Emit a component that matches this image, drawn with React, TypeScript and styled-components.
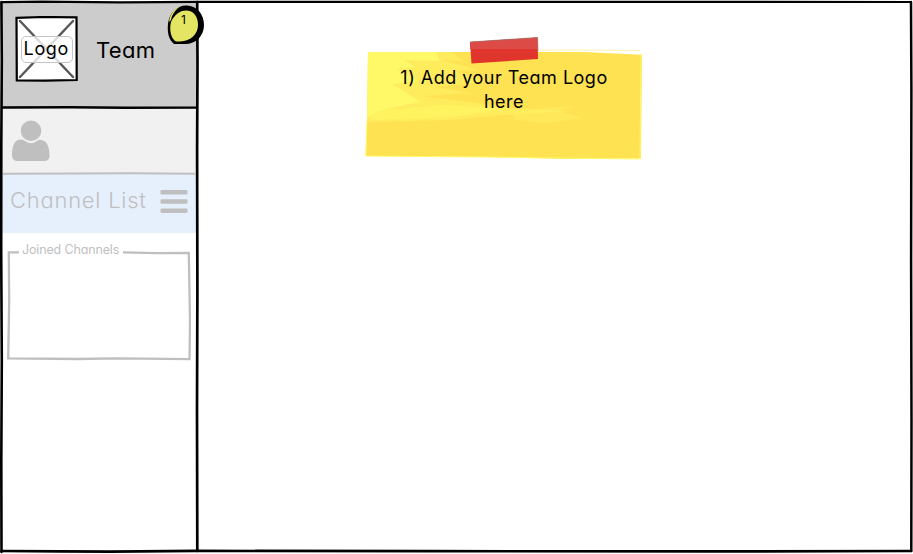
import React from "react";
import styled, { createGlobalStyle } from "styled-components";

const GlobalStyle = createGlobalStyle`
  * { box-sizing: border-box; }
  html, body { margin: 0; background: #fff; overflow: hidden; }
  body { font-family: Inter, "Liberation Sans", sans-serif; font-feature-settings: "cv11" 1; color: #000; }
  svg { display: block; }
`;

const Page = styled.div`
  position: relative;
  display: flex;
  width: 913px;
  height: 554px;
  padding: 2px;
  overflow: hidden;
`;

const Overlay = styled.svg`
  position: absolute;
  inset: 0;
  pointer-events: none;
`;

const Sidebar = styled.aside`
  display: flex;
  flex-direction: column;
  width: 194px;
`;

const TeamHeader = styled.header`
  display: flex;
  align-items: flex-start;
  height: 106px;
  padding: 14px 0 0 13px;
  background: #ccc;
`;

const LogoBox = styled.div`
  position: relative;
  width: 63px;
  height: 66px;
`;

const LogoLabel = styled.span`
  position: absolute;
  left: 6px;
  top: 20px;
  width: 52px;
  height: 27px;
  padding-left: 1.5px;
  border: 1px solid #c4c4c4;
  border-radius: 5px;
  background: rgba(255, 255, 255, 0.78);
  font-size: 18px;
  line-height: 24px;
  letter-spacing: 0.7px;
  white-space: nowrap;
`;

const TeamName = styled.h1`
  margin: 21px 0 0 18px;
  font-size: 22px;
  font-weight: 400;
  line-height: 27px;
  letter-spacing: 0.3px;
`;

const UserBar = styled.section`
  height: 65px;
  padding: 12px 0 0 10px;
  background: #f1f1f1;
`;

const ChannelBar = styled.section`
  display: flex;
  align-items: flex-start;
  justify-content: space-between;
  height: 60px;
  padding: 14px 8px 0 8px;
  background: #e6f0fd;
  color: #bfbfbf;
`;

const ChannelTitle = styled.h2`
  margin: 0;
  font-size: 22px;
  font-weight: 350;
  line-height: 27px;
  letter-spacing: 0.75px;
  white-space: nowrap;
`;

const MenuIcon = styled.svg`
  margin-top: 3px;
`;

const ChannelGroup = styled.section`
  position: relative;
  height: 120px;
  margin: 8px 5px 0;
  padding: 1px 0 0 15px;
  color: #bfbfbf;
`;

const GroupLabel = styled.h3`
  margin: 0;
  font-size: 12.5px;
  font-weight: 400;
  line-height: 16px;
  letter-spacing: -0.15px;
  white-space: nowrap;
`;

const Workspace = styled.main`
  flex: 1;
  padding: 34px 0 0 168px;
`;

const Note = styled.article`
  position: relative;
  width: 280px;
  height: 126px;
  padding: 30px 30px 0;
`;

const NoteText = styled.p`
  position: relative;
  margin: 0 -4px;
  font-size: 18px;
  line-height: 24px;
  letter-spacing: 0.5px;
  text-align: center;
`;

const Badge = styled.div`
  position: absolute;
  left: 165px;
  top: 4px;
  width: 40px;
  height: 42px;
`;

const BadgeNumber = styled.span`
  position: absolute;
  left: 16px;
  top: 8px;
  font-size: 12px;
  line-height: 16px;
`;

function PageOutline() {
  return (
    <Overlay width="913" height="554" viewBox="0 0 913 554" fill="none" stroke="#000" strokeLinecap="round">
      <path d="M2 2.2L42 1.6L120 2.3L197 1.8L420 1.8L650 1.8L911 2" strokeWidth="2.2" />
      <path d="M1.4 2L1.8 60L1.3 145L1.2 250L1.8 360L1.3 460L1.5 552" strokeWidth="2.6" />
      <path d="M911 2L911.4 90L911.1 260L911.5 420L911.3 551" strokeWidth="2.5" />
      <path d="M1.5 551L60 551.3L110 551.6L197 550.9L430 551.2L710 551.4L911 551" strokeWidth="2.7" />
      <path d="M197.2 2L197.5 65L197.1 150L197.4 290L197 410L197.3 551" strokeWidth="2.7" />
      <path d="M2 107.5L70 107.2L125 107.8L196 107.6" strokeWidth="2.4" />
      <path d="M3 173.8L70 173.5L130 173.2L196 173.8" stroke="#bfbfbf" strokeWidth="2" strokeLinecap="butt" />
    </Overlay>
  );
}

export default function App() {
  return (
    <>
      <GlobalStyle />
      <Page>
        <Sidebar>
          <TeamHeader>
            <LogoBox>
              <svg width="63" height="66" viewBox="0 0 63 66">
                <path d="M1.5 1.8L29 1L61.5 1.4L61.7 64L30 64.6L1.8 64.4Z" fill="#fff" stroke="#000" strokeWidth="2.2" />
                <path d="M5 5L58 61M58 5L5 61" stroke="#595959" strokeWidth="2.5" strokeLinecap="round" />
              </svg>
              <LogoLabel>Logo</LogoLabel>
            </LogoBox>
            <TeamName>Team</TeamName>
          </TeamHeader>
          <UserBar>
            <svg width="38" height="42" viewBox="0 0 38 42" fill="#bfbfbf">
              <ellipse cx="19" cy="10.8" rx="10.3" ry="10.3" />
              <path d="M8 19.5Q11 19 13 21Q19 25.5 25 21Q27 19 31 20.5C36 22 37.5 29 37.5 36Q37.5 41 32 41H6Q0 41 0 35C0 27 2 20 8 19.5Z" />
            </svg>
          </UserBar>
          <ChannelBar>
            <ChannelTitle>Channel List</ChannelTitle>
            <MenuIcon width="28" height="24" viewBox="0 0 28 24" fill="#bfbfbf">
              <rect x="0.5" y="0" width="27" height="4.5" rx="1.3" />
              <rect x="0.5" y="9.2" width="27" height="4.5" rx="1.3" />
              <rect x="0.5" y="18.4" width="27" height="4.5" rx="1.3" />
            </MenuIcon>
          </ChannelBar>
          <ChannelGroup>
            <GroupLabel>Joined Channels</GroupLabel>
            <Overlay width="184" height="120" viewBox="0 0 184 120" fill="none" stroke="#bfbfbf" strokeWidth="2.3">
              <path d="M12 11.3H1.8L2.2 60L1.2 117.4L70 118L110 117.3L182.5 118.2L183 80L181.8 11.8L150 12.2L116 11.3" />
            </Overlay>
          </ChannelGroup>
        </Sidebar>
        <Workspace>
          <Note>
            <Overlay width="280" height="126" viewBox="0 0 280 126">
              <path d="M4 16H220L278 18.8L277 122.5L200 123L120 121L1.5 120L3 84Z" fill="#ffe252" />
              <path d="M4 16H88L99 25L78 24L116 34L90 35L124 46L69 51L108 57L60 60L112 67L145 72L210 75L140 79L88 84L3 86Z" fill="#fff568" opacity=".5" />
              <path d="M4 16H72L76 25L40 24L52 31L33 33L54 45L28 48L57 66L13 75L3 82Z" fill="#ffff6e" opacity=".7" />
              <path d="M7 75L80 69L138 73L89 81L7 84Z" fill="#ffff66" opacity=".36" />
              <path d="M150 77L186 71L214 70L194 75L219 82L182 87L150 84Z" fill="#fff365" opacity=".4" />
              <path d="M3 85L2 120L125 121L276 123L277 18" fill="none" stroke="#fff965" strokeWidth="1" />
              <path d="M155 14.5L198 14L276 14.5" fill="none" stroke="#fff4ae" strokeWidth="1" />
              <path d="M106 6L173.5 1.5L174 23L107.5 27.5Z" fill="#df352d" />
              <path d="M106 6L173.5 1.5V13H106Z" fill="#dc4b45" />
              <path d="M106 6L173.5 1.5L174 15" fill="none" stroke="#99736c" strokeWidth=".7" />
            </Overlay>
            <NoteText>1) Add your Team Logo<br />here</NoteText>
          </Note>
        </Workspace>
        <PageOutline />
        <Badge>
          <svg width="40" height="42" viewBox="0 0 40 42">
            <path d="M3 20C4 9 12 1 22 1.5C32 2 39 10 39 21C39 32 31 40 20 40H9C4 36 2 29 3 20Z" fill="#000" />
            <path d="M4 18C5 10 9 5 15 2C11 6 7 10 6 16Z" fill="#e4e562" />
            <path d="M6 18C9 11 15 6 22 6.5C29 7 33 13 33 21C33 30 26 37 15 37.5H11C6 35 4 26 6 18Z" fill="#e4e562" />
          </svg>
          <BadgeNumber>1</BadgeNumber>
        </Badge>
      </Page>
    </>
  );
}
